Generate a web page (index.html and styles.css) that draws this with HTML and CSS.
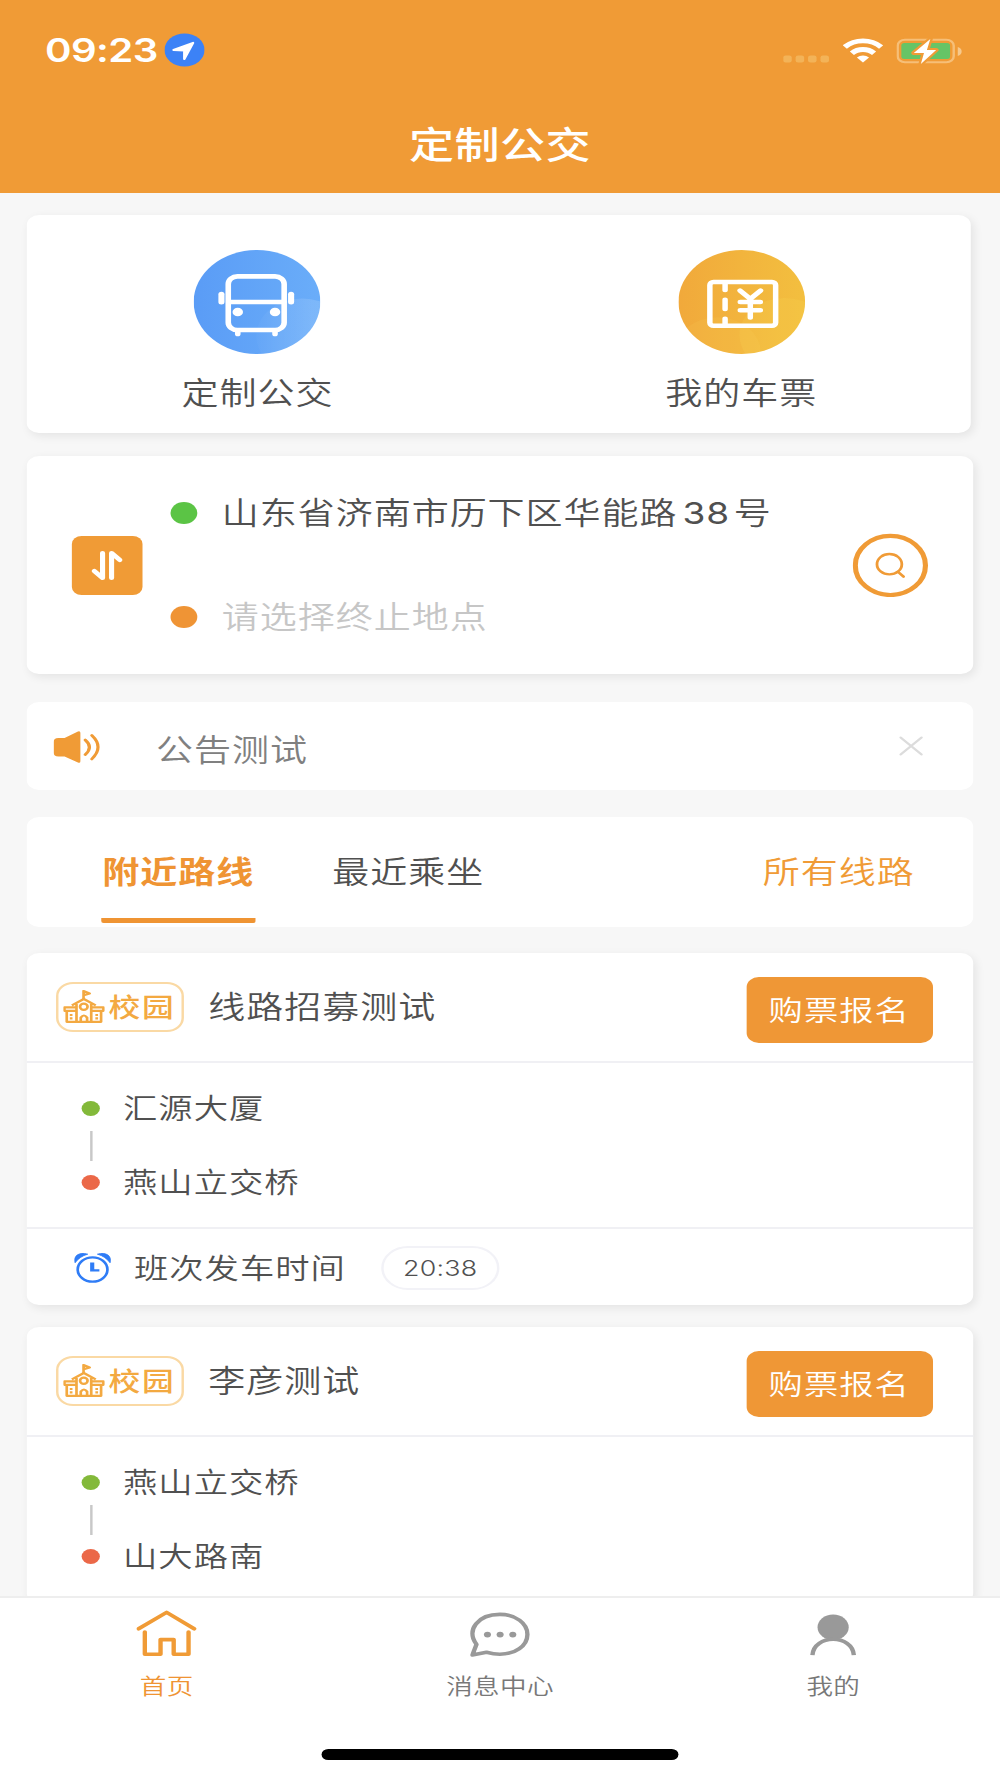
FILE: index.html
```html
<!DOCTYPE html>
<html lang="zh-CN">
<head>
    <meta charset="UTF-8">
    <meta name="viewport" content="width=device-width, initial-scale=1.0">
    <title>定制公交</title>
    <link rel="stylesheet" href="styles.css">
</head>
<body>
    <div class="screen">
        <header class="header">
            <div class="status-bar">
                <span class="clock">09:23</span>
                <svg class="location" viewBox="0 0 33 34">
                    <circle cx="16.5" cy="17" r="16.5" fill="#3c82f6"/>
                    <path d="M7.5 17 L23.5 9.8 L16.3 26 V17.5 Z" fill="#fff" stroke="#fff" stroke-width="2" stroke-linejoin="round"/>
                </svg>
                <svg class="signal" viewBox="0 0 38 8" fill="#f3b358">
                    <rect x="0" y="0.5" width="7" height="7" rx="2"/>
                    <rect x="10.2" y="0.5" width="7" height="7" rx="2"/>
                    <rect x="20.4" y="0.5" width="7" height="7" rx="2"/>
                    <rect x="30.6" y="0.5" width="7" height="7" rx="2"/>
                </svg>
                <svg class="wifi" viewBox="0 0 33 25">
                    <g fill="none" stroke="#fff" stroke-width="4.8">
                        <path d="M1.6 9 A21 21 0 0 1 31.4 9"/>
                        <path d="M7.4 15.2 A13 13 0 0 1 25.6 15.2"/>
                    </g>
                    <path d="M16.5 24.5 L11.5 19.5 A7.2 7.2 0 0 1 21.5 19.5 Z" fill="#fff"/>
                </svg>
                <svg class="battery" viewBox="0 0 54 26">
                    <rect x="1" y="1.7" width="46" height="22.6" rx="6" fill="none" stroke="#f6bf78" stroke-width="2"/>
                    <rect x="4" y="5" width="40" height="16" rx="2.5" fill="#66c466"/>
                    <path d="M50.3 9 C54.6 10.5 54.6 16.5 50.3 18 Z" fill="#f7c98c"/>
                    <path d="M27.8 1 L14.2 15 H22.6 L20 26 L32.6 12 H25 Z" fill="#fff" stroke="#f09b36" stroke-width="4" stroke-linejoin="round"/>
                    <path d="M27.8 1 L14.2 15 H22.6 L20 26 L32.6 12 H25 Z" fill="#fff"/>
                </svg>
            </div>
            <h1 class="title">定制公交</h1>
        </header>

        <main class="content">
            <section class="card entries">
                <div class="entry">
                    <svg class="entry-icon" viewBox="0 0 104 104">
                        <defs>
                            <linearGradient id="blue">
                                <stop offset="0" stop-color="#5a9cf6"/>
                                <stop offset="1" stop-color="#6aadf9"/>
                            </linearGradient>
                            <linearGradient id="shine">
                                <stop offset="0" stop-color="#fff" stop-opacity="0.02"/>
                                <stop offset="0.6" stop-color="#fff" stop-opacity="0.13"/>
                            </linearGradient>
                            <clipPath id="round"><circle cx="52" cy="52" r="52"/></clipPath>
                        </defs>
                        <g clip-path="url(#round)">
                            <rect width="104" height="104" fill="url(#blue)"/>
                            <circle cx="89" cy="86" r="37.5" fill="url(#shine)"/>
                        </g>
                        <g fill="none" stroke="#fff" stroke-width="4.6" stroke-linecap="round">
                            <rect x="28.4" y="26.4" width="45.9" height="53.6" rx="7.5"/>
                            <path d="M29 52 H74 M36.2 81 V84 M66.8 81 V84"/>
                        </g>
                        <g fill="#fff">
                            <circle cx="36.2" cy="62" r="4.3"/>
                            <circle cx="66.8" cy="62" r="4.3"/>
                            <rect x="20.3" y="41.7" width="5" height="12.8" rx="2.5"/>
                            <rect x="77.5" y="41.7" width="5" height="12.8" rx="2.5"/>
                        </g>
                    </svg>
                    <span class="entry-label">定制公交</span>
                </div>
                <div class="entry">
                    <svg class="entry-icon" viewBox="0 0 104 104">
                        <defs>
                            <linearGradient id="gold">
                                <stop offset="0" stop-color="#f1a93b"/>
                                <stop offset="1" stop-color="#f3bf3f"/>
                            </linearGradient>
                        </defs>
                        <g clip-path="url(#round)">
                            <rect width="104" height="104" fill="url(#gold)"/>
                            <circle cx="87" cy="85" r="37" fill="#fff36a" opacity="0.1"/>
                            <circle cx="32" cy="103" r="35.7" fill="#ffe36a" opacity="0.1"/>
                        </g>
                        <g fill="none" stroke="#fff" stroke-width="4.5" stroke-linecap="round" stroke-linejoin="round">
                            <rect x="25.8" y="32" width="54" height="43.7" rx="3"/>
                            <path d="M38.3 33 V40 M38.3 49.8 V59 M38.3 68.8 V75"/>
                            <path d="M50.6 40.6 L59 48.8 L67.4 40.6 M59 48.8 V67.4 M50.8 52 H67.2 M50.8 60.2 H67.2"/>
                        </g>
                    </svg>
                    <span class="entry-label">我的车票</span>
                </div>
            </section>

            <section class="card search">
                <button class="swap" title="交换">
                    <svg viewBox="0 0 58 59" fill="none" stroke="#fff" stroke-width="4.2" stroke-linecap="round" stroke-linejoin="round">
                        <path d="M25.2 17 V42 L18.4 35 M32.6 42 V17 L39.4 24"/>
                    </svg>
                </button>
                <div class="places">
                    <div class="place"><i class="dot dot-start"></i><span>山东省济南市历下区华能路<span class="number">38</span>号</span></div>
                    <div class="place place-empty"><i class="dot dot-end"></i><span>请选择终止地点</span></div>
                </div>
                <button class="search-btn" title="搜索">
                    <svg viewBox="0 0 62 64" fill="none" stroke="#f09b36" stroke-linecap="round">
                        <ellipse cx="31" cy="32.4" rx="28.8" ry="29.6" stroke-width="4.2"/>
                        <circle cx="30.2" cy="31.2" r="10.2" stroke-width="2.3"/>
                        <path d="M37.4 39 L41.8 43.6" stroke-width="2.5"/>
                    </svg>
                </button>
            </section>

            <section class="notice">
                <svg class="speaker" viewBox="0 0 38 32">
                    <path d="M4 7 H9 L20 0.4 Q22 -0.4 22 1.8 V30.2 Q22 32.4 20 31.6 L9 25.6 H4 Q0 25.6 0 21.6 V11 Q0 7 4 7 Z" fill="#f09b36"/>
                    <path d="M26 9 Q32.8 16 26 23.6 M31.4 4.4 Q41.6 16 31.4 28" fill="none" stroke="#f09b36" stroke-width="2.6" stroke-linecap="round"/>
                </svg>
                <span class="notice-text">公告测试</span>
                <svg class="close" viewBox="0 0 20 20" fill="none" stroke="#dcdcdc" stroke-width="2" stroke-linecap="round">
                    <path d="M1.4 1.5 L18.6 18.5 M18.6 1.5 L1.4 18.5"/>
                </svg>
            </section>

            <nav class="tabs">
                <a class="tab tab-active">附近路线</a>
                <a class="tab">最近乘坐</a>
                <a class="tab tab-all">所有线路</a>
            </nav>

            <article class="card route">
                <div class="route-head">
                    <span class="badge">
                        <svg viewBox="0 0 34 33" fill="none" stroke="#f3a941" stroke-width="2.2" stroke-linejoin="round">
                            <path d="M16.6 9 V1 L21.6 3.4 L16.8 5.2"/>
                            <path d="M7 15.4 L16.8 9 L26.6 15.4 M10.8 14 V31.8 M22.9 14 V31.8 M10.5 17.4 H0.9 V20.8 H10.5 M23 17.4 H32.9 V20.8 H23 M2.8 21 V31.8 H31 V21"/>
                            <circle cx="16.8" cy="16.8" r="3.1"/>
                            <path d="M14.3 31.6 V27.6 Q16.9 23.4 19.5 27.6 V31.6 M5.3 25 H7.5 M5.3 28.4 H7.5 M26.3 25 H28.5 M26.3 28.4 H28.5"/>
                        </svg>
                        <span>校园</span>
                    </span>
                    <h2 class="route-name">线路招募测试</h2>
                    <button class="buy">购票报名</button>
                </div>
                <div class="stops">
                    <div class="stop"><i class="stop-dot"></i>汇源大厦</div>
                    <div class="stop-line"></div>
                    <div class="stop"><i class="stop-dot stop-dot-end"></i>燕山立交桥</div>
                </div>
                <div class="schedule">
                    <svg class="alarm" viewBox="0 0 30 30">
                        <path d="M0.6 9.8 C-1.2 3 4 -1.4 11 1.2 C6.8 2.4 3 5.6 0.6 9.8 Z M29.4 9.8 C31.2 3 26 -1.4 19 1.2 C23.2 2.4 27 5.6 29.4 9.8 Z" fill="#2f7cf6" stroke="#2f7cf6" stroke-width="0.8" stroke-linejoin="round"/>
                        <circle cx="15" cy="16.5" r="12.2" fill="none" stroke="#2f7cf6" stroke-width="2.2"/>
                        <path d="M13 9.4 H16.4 V16.2 H20.6 V18.6 H13 Z" fill="#2f7cf6"/>
                    </svg>
                    <span class="schedule-label">班次发车时间</span>
                    <span class="time">20:38</span>
                </div>
            </article>

            <article class="card route">
                <div class="route-head">
                    <span class="badge">
                        <svg viewBox="0 0 34 33" fill="none" stroke="#f3a941" stroke-width="2.2" stroke-linejoin="round">
                            <path d="M16.6 9 V1 L21.6 3.4 L16.8 5.2"/>
                            <path d="M7 15.4 L16.8 9 L26.6 15.4 M10.8 14 V31.8 M22.9 14 V31.8 M10.5 17.4 H0.9 V20.8 H10.5 M23 17.4 H32.9 V20.8 H23 M2.8 21 V31.8 H31 V21"/>
                            <circle cx="16.8" cy="16.8" r="3.1"/>
                            <path d="M14.3 31.6 V27.6 Q16.9 23.4 19.5 27.6 V31.6 M5.3 25 H7.5 M5.3 28.4 H7.5 M26.3 25 H28.5 M26.3 28.4 H28.5"/>
                        </svg>
                        <span>校园</span>
                    </span>
                    <h2 class="route-name">李彦测试</h2>
                    <button class="buy">购票报名</button>
                </div>
                <div class="stops">
                    <div class="stop"><i class="stop-dot"></i>燕山立交桥</div>
                    <div class="stop-line"></div>
                    <div class="stop"><i class="stop-dot stop-dot-end"></i>山大路南</div>
                </div>
            </article>
        </main>

        <footer class="footer">
            <nav class="tab-bar">
                <a class="bar-item bar-item-active">
                    <svg viewBox="0 0 50 48" fill="none" stroke="#f09b36" stroke-width="3.6" stroke-linecap="round" stroke-linejoin="round">
                        <path d="M1.8 19.8 L24.8 3.4 L47.4 19.8"/>
                        <path d="M6.9 23 V45.2 H19.8 V30.6 H30.6 V45.2 H42.8 V23"/>
                    </svg>
                    <span>首页</span>
                </a>
                <a class="bar-item">
                    <svg viewBox="0 0 50 48" fill="none" stroke="#999" stroke-width="3.6" stroke-linejoin="round">
                        <path d="M1.8 46 L5.2 35.4 C-3.6 21 6.4 5.4 24.4 5.4 C37.4 5.4 47 14.4 47 25.4 C47 36.8 37 45.2 24.4 45.2 C20 45.2 17 44.4 13.4 43.2 Z"/>
                        <g fill="#999" stroke="none">
                            <circle cx="14.2" cy="25.6" r="2.9"/>
                            <circle cx="24.6" cy="25.6" r="2.9"/>
                            <circle cx="35" cy="25.6" r="2.9"/>
                        </g>
                    </svg>
                    <span>消息中心</span>
                </a>
                <a class="bar-item">
                    <svg viewBox="0 0 50 48">
                        <circle cx="25" cy="18.2" r="12.8" fill="#999"/>
                        <path d="M8 46.2 C9 25 41 25 42 46.2" fill="none" stroke="#999" stroke-width="3.6"/>
                    </svg>
                    <span>我的</span>
                </a>
            </nav>
            <div class="home-indicator"></div>
        </footer>
    </div>
</body>
</html>
```

FILE: styles.css
```css
* {
    box-sizing: border-box;
}
body {
    margin: 0;
    overflow: hidden;
    background-color: #f7f7f7;
}
/* the phone screen is laid out narrow and widened to fill the window */
.screen {
    width: 821px;
    height: 1778px;
    display: flex;
    flex-direction: column;
    transform: scaleX(1.21803);
    transform-origin: 0 0;
    font-family: Inter, "Noto Sans CJK SC", sans-serif;
    font-size: 30.4px;
    font-weight: 350;
    letter-spacing: 0.8px;
    line-height: 1.2;
    color: #505050;
    background-color: #f7f7f7;
    overflow: hidden;
}
svg {
    display: block;
    flex: none;
}
button {
    border: none;
    padding: 0;
    font-family: inherit;
    font-weight: inherit;
    letter-spacing: inherit;
}
h1, h2 {
    margin: 0;
}

.header {
    height: 193px;
    flex: none;
    background-color: #f09b36;
    color: #fff;
}
.status-bar {
    height: 100px;
    display: flex;
    align-items: center;
    padding: 0 31px 0 37px;
}
.clock {
    width: 98px;
    margin-top: 2px;
    font-size: 33px;
    font-weight: 600;
    letter-spacing: -0.5px;
}
.location {
    width: 33px;
    height: 34px;
}
.signal {
    width: 38px;
    height: 8px;
    margin: 17px 11px 0 auto;
}
.wifi {
    width: 33px;
    height: 25px;
}
.battery {
    width: 54px;
    height: 26px;
    margin: 1px 0 0 11px;
}
.title {
    height: 92px;
    line-height: 92px;
    text-align: center;
    font-size: 37px;
    font-weight: 500;
    letter-spacing: 0.4px;
}

.content {
    flex: 1;
    min-height: 0;
    overflow: hidden;
    padding: 22px 22px 0;
}
.card {
    background-color: #fff;
    border-radius: 10px;
    box-shadow: 2px 3px 9px rgba(0, 0, 0, 0.08);
}
.entries {
    height: 218px;
    margin-right: 2px;
    padding: 35px 126px 0 127px;
    display: flex;
    justify-content: space-between;
}
.entry {
    display: flex;
    flex-direction: column;
    align-items: center;
    gap: 21px;
}
.entry-icon {
    width: 104px;
    height: 104px;
}

.search {
    height: 218px;
    margin-top: 23px;
    padding: 0 37px;
    display: flex;
    align-items: center;
}
.swap {
    width: 58px;
    height: 59px;
    border-radius: 8px;
    background-color: #f09b36;
}
.places {
    flex: 1;
    padding-left: 23px;
    display: flex;
    flex-direction: column;
    gap: 67px;
}
.place {
    display: flex;
    align-items: center;
    gap: 20px;
    white-space: nowrap;
}
.place-empty {
    color: #c6c6c6;
}
.number {
    margin: 0 3px 0 4px;
    font-weight: 400;
}
.dot {
    width: 22px;
    height: 22px;
    border-radius: 50%;
}
.dot-start {
    background-color: #5bc445;
}
.dot-end {
    background-color: #ef9435;
}
.search-btn {
    width: 62px;
    height: 64px;
    background: none;
}

.notice {
    height: 88px;
    margin-top: 28px;
    padding: 2px 41px 0 22px;
    display: flex;
    align-items: center;
    border-radius: 10px;
    background-color: #fff;
}
.speaker {
    width: 38px;
    height: 32px;
}
.notice-text {
    margin: 6px 0 0 46px;
    color: #808080;
}
.close {
    width: 20px;
    height: 20px;
    margin: -2px 0 0 auto;
}

.tabs {
    height: 110px;
    margin-top: 27px;
    padding: 0 47px 0 61px;
    display: flex;
    align-items: stretch;
    border-radius: 10px;
    background-color: #fff;
}
.tab {
    height: 106px;
    line-height: 110px;
    padding: 0 1px;
    margin-right: 62px;
}
.tab-active {
    color: #ef9433;
    font-weight: 700;
    border-bottom: 5px solid #ef9433;
    border-radius: 2px;
}
.tab-all {
    margin: 0 0 0 auto;
    color: #f09b36;
}

.route {
    margin-top: 26px;
    font-size: 28.2px;
}
.route + .route {
    margin-top: 22px;
}
.route-head {
    height: 110px;
    padding: 0 33px 0 24px;
    display: flex;
    align-items: center;
    border-bottom: 2px solid #f0f0f4;
}
.badge {
    width: 105px;
    height: 50px;
    display: flex;
    align-items: center;
    padding-left: 4px;
    gap: 3px;
    border: 2px solid #fad9a4;
    border-radius: 14px;
    font-size: 26px;
    font-weight: 500;
    letter-spacing: 1.5px;
    color: #f3a941;
}
.badge span {
    margin-top: 2px;
}
.badge svg {
    width: 34px;
    height: 33px;
    margin-top: -2px;
}
.route-name {
    margin-left: 20px;
    font-size: 30.4px;
    font-weight: 350;
}
.buy {
    width: 153px;
    height: 66px;
    margin: 6px 0 0 auto;
    padding: 0 1px 3px 0;
    border-radius: 10px;
    background-color: #ef9736;
    color: #fff;
    font-size: 28.2px;
}
.stops {
    height: 166px;
    padding: 27px 0 0 45px;
    border-bottom: 2px solid #f0f0f4;
}
.stop {
    height: 40px;
    display: flex;
    align-items: center;
    gap: 19px;
}
.stop-dot {
    width: 15px;
    height: 15px;
    margin-bottom: 3px;
    border-radius: 50%;
    background-color: #83b93a;
}
.stop-dot-end {
    background-color: #eb6848;
}
.stop-line {
    width: 2.4px;
    height: 30px;
    margin: 1px 0 3px 7px;
    background-color: #c8c8c8;
}
.schedule {
    height: 76px;
    padding: 2px 0 0 39px;
    display: flex;
    align-items: center;
}
.schedule-label {
    margin-top: 3px;
}
.alarm {
    width: 30px;
    height: 30px;
    margin-right: 19px;
}
.time {
    width: 97px;
    height: 44px;
    margin-left: 29px;
    border: 2px solid #f2f2f7;
    border-radius: 22px;
    line-height: 41px;
    text-align: center;
    font-size: 22px;
    font-weight: 300;
    letter-spacing: 0.2px;
}

.footer {
    height: 182px;
    flex: none;
    display: flex;
    flex-direction: column;
    align-items: center;
    background-color: #fff;
    border-top: 2px solid #eee;
}
.tab-bar {
    width: 100%;
    height: 151px;
    display: flex;
}
.bar-item {
    flex: 1;
    padding-top: 11px;
    display: flex;
    flex-direction: column;
    align-items: center;
    gap: 16px;
    font-size: 21.8px;
    letter-spacing: 0.3px;
    color: #787878;
}
.bar-item svg {
    width: 50px;
    height: 48px;
}
.bar-item-active {
    color: #ef9433;
}
.home-indicator {
    width: 293px;
    height: 11px;
    border-radius: 6px;
    background-color: #000;
}
```
